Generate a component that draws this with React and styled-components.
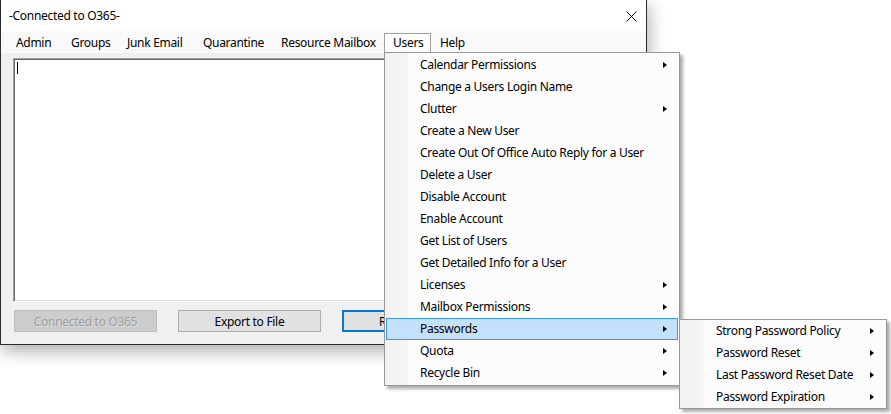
import React from "react";
import styled, { createGlobalStyle } from "styled-components";

const Global = createGlobalStyle`
  html, body { margin: 0; padding: 0; background: #ffffff; }
  body {
    font-family: "Noto Sans", "Segoe UI", sans-serif;
    font-size: 12px;
    letter-spacing: -0.3px;
    color: #000;
  }
`;

const Page = styled.div`
  position: relative;
  width: 891px;
  height: 414px;
  overflow: hidden;
`;

const Window = styled.div`
  width: 647px;
  height: 345px;
  box-sizing: border-box;
  border: 1px solid #2b2b2b;
  border-top: none;
  background: #f0f0f0;
  box-shadow: 2px 6px 16px rgba(0, 0, 0, 0.32);
  display: flex;
  flex-direction: column;
`;

const TitleBar = styled.div`
  height: 31px;
  background: #ffffff;
  display: flex;
  align-items: center;
  justify-content: space-between;
  padding: 0 9px 0 8px;
  font-size: 12px;
`;

const CloseIcon = () => (
  <svg width="11" height="11" viewBox="0 0 11 11" style={{ marginTop: 1 }}>
    <path d="M0.5 0.5 L10.5 10.5 M10.5 0.5 L0.5 10.5" stroke="#000" strokeWidth="1" fill="none" />
  </svg>
);

const MenuBar = styled.div`
  height: 22px;
  background: #f9f9f9;
  display: flex;
  align-items: flex-start;
  padding-left: 6px;
`;

const MenuItem = styled.div`
  position: relative;
  box-sizing: border-box;
  width: ${(p) => p.$w}px;
  height: 19px;
  margin-top: 2px;
  padding-left: 8px;
  line-height: 18px;
  white-space: nowrap;
  border: 1px solid ${(p) => (p.$open ? "#a0a0a0" : "transparent")};
  border-bottom: none;
  background: ${(p) => (p.$open ? "#fcfcfc" : "transparent")};
  z-index: ${(p) => (p.$open ? 3 : 1)};
`;

const Body = styled.div`
  flex: 1;
  display: flex;
  flex-direction: column;
  padding: 5px 12px 0 12px;
`;

const TextArea = styled.div`
  height: 244px;
  box-sizing: border-box;
  background: #ffffff;
  border-top: 1px solid #a0a0a0;
  border-left: 1px solid #a0a0a0;
  border-right: 1px solid #ffffff;
  border-bottom: 1px solid #ffffff;
  box-shadow: inset 1px 1px 0 #696969, inset -1px -1px 0 #e3e3e3;
  padding: 3px 0 0 3px;
`;

const Caret = styled.div`
  width: 1px;
  height: 12px;
  background: #000;
`;

const ButtonRow = styled.div`
  display: flex;
  gap: 21px;
  margin-top: 8px;
  padding-left: 1px;
`;

const Button = styled.div`
  width: 143px;
  height: 22px;
  box-sizing: border-box;
  display: flex;
  align-items: center;
  justify-content: center;
  font-size: 12px;
  white-space: nowrap;
  background: ${(p) => (p.$disabled ? "#cccccc" : "#e1e1e1")};
  color: ${(p) => (p.$disabled ? "#a0a0a0" : "#000")};
  border: ${(p) =>
    p.$default ? "2px solid #0078d7" : p.$disabled ? "1px solid #bfbfbf" : "1px solid #adadad"};
  text-shadow: ${(p) => (p.$disabled ? "1px 1px 0 rgba(255,255,255,0.35)" : "none")};
`;

const menuBg = "linear-gradient(to right, #f1f1f1 0, #f6f6f6 23px, #fcfcfc 24px, #fcfcfc 100%)";

const Dropdown = styled.div`
  position: absolute;
  left: -1px;
  top: 100%;
  width: 296px;
  box-sizing: border-box;
  border: 1px solid #979797;
  padding: 1px;
  background: ${menuBg};
  box-shadow: 3px 3px 3px rgba(0, 0, 0, 0.32);
  z-index: 5;
`;

const DropItem = styled.div`
  position: relative;
  height: 22px;
  box-sizing: border-box;
  display: flex;
  align-items: center;
  padding-left: 33px;
  padding-right: 10px;
  white-space: nowrap;
  border: 1px solid ${(p) => (p.$hl ? "#3d97f0" : "transparent")};
  background: ${(p) => (p.$hl ? "#c4e0fb" : "transparent")};
`;

const Label = styled.span`
  flex: 1;
  margin-top: -1px;
`;

const Arrow = styled.span`
  width: 0;
  height: 0;
  border-left: 4px solid #000;
  border-top: 3.5px solid transparent;
  border-bottom: 3.5px solid transparent;
`;

const SubMenu = styled.div`
  position: absolute;
  left: calc(100% + 2px);
  top: 0;
  width: 208px;
  box-sizing: border-box;
  border: 1px solid #979797;
  padding: 0 1px 0 2px;
  background: ${menuBg};
  box-shadow: 3px 3px 3px rgba(0, 0, 0, 0.32);
  z-index: 6;
`;

const menus = [
  { label: "Admin", w: 55 },
  { label: "Groups", w: 56 },
  { label: "Junk Email", w: 76 },
  { label: "Quarantine", w: 78 },
  { label: "Resource Mailbox", w: 112 },
  { label: "Users", w: 47, open: true },
  { label: "Help", w: 40 },
];

const userItems = [
  ["Calendar Permissions", true],
  ["Change a Users Login Name", false],
  ["Clutter", true],
  ["Create a New User", false],
  ["Create Out Of Office Auto Reply for a User", false],
  ["Delete a User", false],
  ["Disable Account", false],
  ["Enable Account", false],
  ["Get List of Users", false],
  ["Get Detailed Info for a User", false],
  ["Licenses", true],
  ["Mailbox Permissions", true],
  ["Passwords", true],
  ["Quota", true],
  ["Recycle Bin", true],
];

const passwordItems = [
  "Strong Password Policy",
  "Password Reset",
  "Last Password Reset Date",
  "Password Expiration",
];

export default function App() {
  return (
    <Page>
      <Global />
      <Window>
        <TitleBar>
          <span>-Connected to O365-</span>
          <CloseIcon />
        </TitleBar>
        <MenuBar>
          {menus.map((m) => (
            <MenuItem key={m.label} $w={m.w} $open={m.open}>
              {m.label}
              {m.open && (
                <Dropdown>
                  {userItems.map(([label, sub]) => {
                    const hl = label === "Passwords";
                    return (
                      <DropItem key={label} $hl={hl}>
                        <Label>{label}</Label>
                        {sub && <Arrow />}
                        {hl && (
                          <SubMenu>
                            {passwordItems.map((p) => (
                              <DropItem key={p}>
                                <Label>{p}</Label>
                                <Arrow />
                              </DropItem>
                            ))}
                          </SubMenu>
                        )}
                      </DropItem>
                    );
                  })}
                </Dropdown>
              )}
            </MenuItem>
          ))}
        </MenuBar>
        <Body>
          <TextArea>
            <Caret />
          </TextArea>
          <ButtonRow>
            <Button $disabled>Connected to O365</Button>
            <Button>Export to File</Button>
            <Button $default>Refresh View</Button>
          </ButtonRow>
        </Body>
      </Window>
    </Page>
  );
}
